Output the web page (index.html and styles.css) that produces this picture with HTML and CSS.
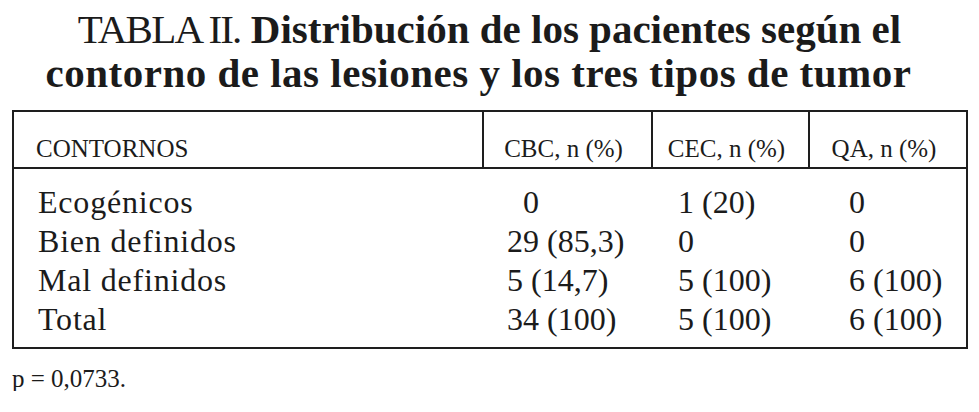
FILE: index.html
```html
<!DOCTYPE html>
<html lang="es">
<head>
<meta charset="utf-8">
<link rel="stylesheet" href="styles.css">
<title>Tabla II</title>
</head>
<body>
<h1 class="title"><span class="line"><span class="label">TABLA II.</span> <span class="strong">Distribución de los pacientes según el</span></span><span class="line line-two strong">contorno de las lesiones y los tres tipos de tumor</span></h1>
<table class="data">
  <colgroup>
    <col class="c1"><col class="c2"><col class="c3"><col class="c4">
  </colgroup>
  <thead>
    <tr>
      <th class="h-first">CONTORNOS</th>
      <th class="h-mid">CBC, n (%)</th>
      <th class="h-mid">CEC, n (%)</th>
      <th class="h-last">QA, n (%)</th>
    </tr>
  </thead>
  <tbody>
    <tr class="r-first">
      <td class="lbl">Ecogénicos</td>
      <td class="v2">&#8199;0</td>
      <td class="v3">1 (20)</td>
      <td class="v4">0</td>
    </tr>
    <tr>
      <td class="lbl">Bien definidos</td>
      <td class="v2">29 (85,3)</td>
      <td class="v3">0</td>
      <td class="v4">0</td>
    </tr>
    <tr>
      <td class="lbl">Mal definidos</td>
      <td class="v2">5 (14,7)</td>
      <td class="v3">5 (100)</td>
      <td class="v4">6 (100)</td>
    </tr>
    <tr class="r-last">
      <td class="lbl">Total</td>
      <td class="v2">34 (100)</td>
      <td class="v3">5 (100)</td>
      <td class="v4">6 (100)</td>
    </tr>
  </tbody>
</table>
<p class="note">p = 0,0733.</p>
</body>
</html>
```

FILE: styles.css
```css
html, body {
  margin: 0;
  padding: 0;
  background: #ffffff;
}
body {
  color: #1b1b1b;
  font-family: "Liberation Serif", "Times New Roman", serif;
}
.title {
  margin: 7px 0 0 0;
  font-size: 41px;
  line-height: 44px;
  font-weight: normal;
  text-align: center;
}
.title .line {
  display: block;
}
.title .line-two {
  padding-right: 22px;
  letter-spacing: 0.5px;
}
.title .label {
  letter-spacing: -1.8px;
}
.title .strong {
  font-weight: bold;
}
.data {
  margin: 15px 0 0 12px;
  width: 956px;
  table-layout: fixed;
  border-collapse: separate;
  border-spacing: 0;
  border: 2px solid #1e1e1e;
}
.c1 { width: 470px; }
.c2 { width: 169px; }
.c3 { width: 157px; }
.c4 { width: 156px; }
.data th {
  font-weight: normal;
  font-size: 25px;
  line-height: 25px;
  padding: 24px 0 6px 0;
  border-bottom: 2px solid #1e1e1e;
  text-align: center;
  white-space: nowrap;
}
.data th.h-first {
  text-align: left;
  padding-left: 22px;
  border-right: 2px solid #1e1e1e;
}
.data th.h-mid {
  border-right: 2px solid #1e1e1e;
  padding-right: 8px;
}
.data th.h-last {
  padding-right: 8px;
}
.data td {
  font-size: 32px;
  line-height: 39px;
  padding: 0;
  white-space: nowrap;
  vertical-align: baseline;
}
.data .r-first td { padding-top: 14px; }
.data .r-last td { padding-bottom: 8px; }
.data td.lbl { padding-left: 24px; letter-spacing: 0.8px; }
.data td.v2 { padding-left: 23px; }
.data td.v3 { padding-left: 25px; }
.data td.v4 { padding-left: 39px; }
.note {
  margin: 17px 0 0 12px;
  font-size: 25px;
  line-height: 25px;
}
```
